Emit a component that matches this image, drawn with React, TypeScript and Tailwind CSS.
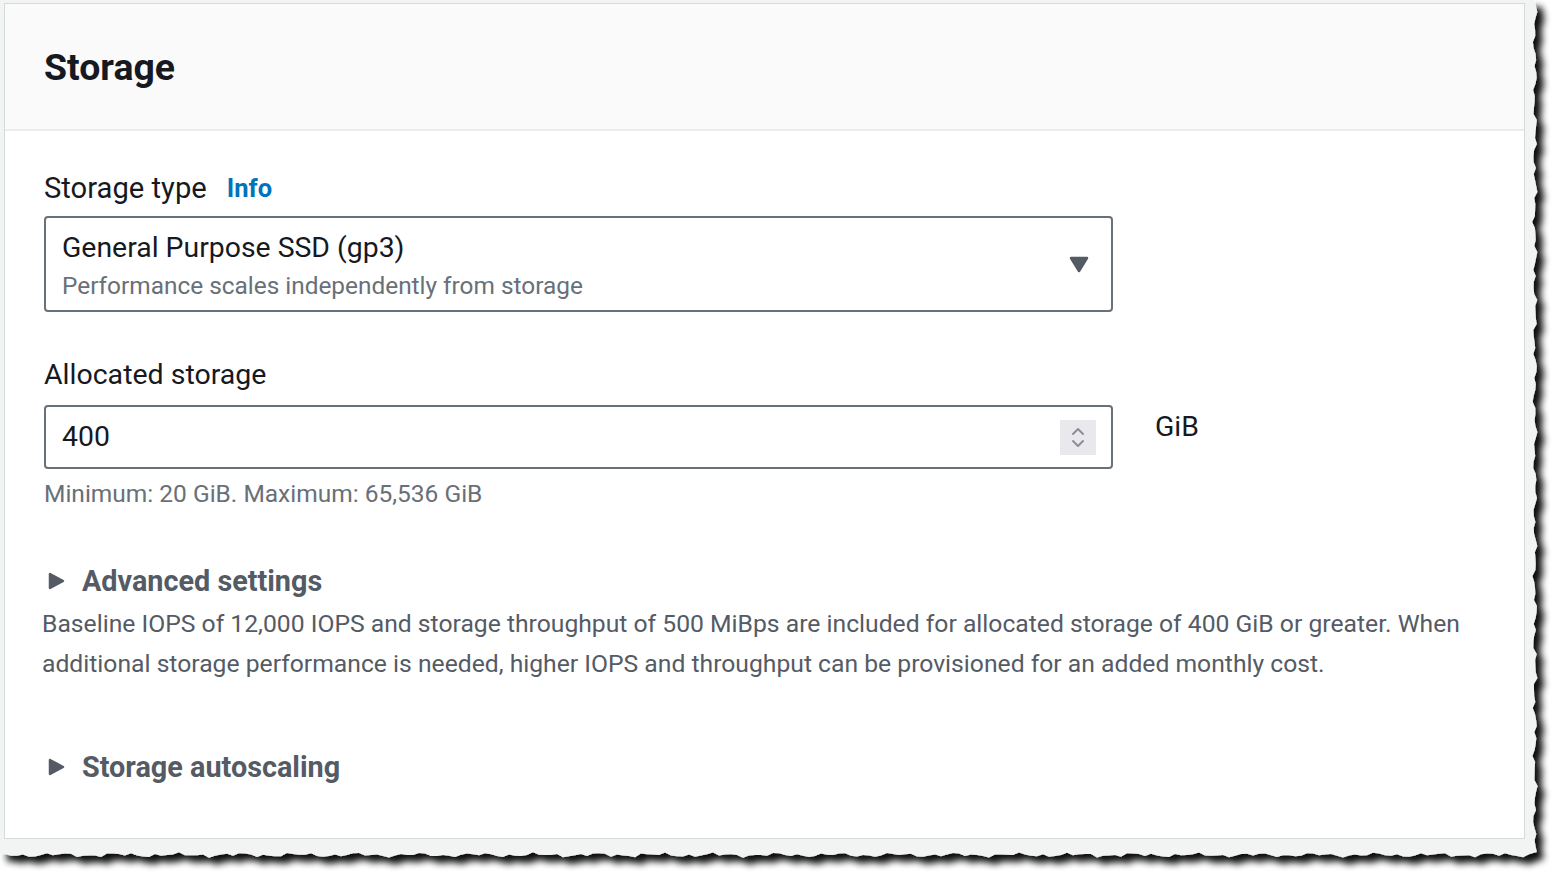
import type { ReactNode } from "react";

// Jagged edge for the torn-paper screenshot frame (right and bottom sides).
function tornPath(): string {
  const right = 1535;
  const bottom = 855;
  const jitter = (i: number) =>
    Math.sin(i * 1.7) * 1.2 + Math.sin(i * 0.63 + 1) * 1.1 + Math.sin(i * 3.1) * 0.6;
  const pts: string[] = ["M0,0", `L${right},0`];
  for (let y = 6, i = 0; y < bottom; y += 6, i++) {
    pts.push(`L${(right + jitter(i)).toFixed(1)},${y}`);
  }
  for (let x = right - 6, i = 40; x > 0; x -= 6, i++) {
    pts.push(`L${x},${(bottom + jitter(i)).toFixed(1)}`);
  }
  pts.push(`L0,${bottom}`, "Z");
  return pts.join(" ");
}

function TornPaper() {
  return (
    <svg width="1560" height="876" className="absolute inset-0" aria-hidden="true">
      <defs>
        <filter id="paperShadow" x="-5%" y="-5%" width="110%" height="110%">
          <feGaussianBlur in="SourceAlpha" stdDeviation="3.5" />
          <feOffset dx="7" dy="7" result="blur" />
          <feComponentTransfer>
            <feFuncA type="linear" slope="0.95" />
          </feComponentTransfer>
          <feMerge>
            <feMergeNode />
            <feMergeNode in="SourceGraphic" />
          </feMerge>
        </filter>
      </defs>
      <path d={tornPath()} fill="#f2f3f3" filter="url(#paperShadow)" />
    </svg>
  );
}

function Caret() {
  return (
    <svg width="17" height="18" viewBox="0 0 17 18" aria-hidden="true" className="shrink-0">
      <path d="M2 2 L15 9 L2 16 Z" fill="#545b64" stroke="#545b64" strokeWidth="2.5" strokeLinejoin="round" />
    </svg>
  );
}

function Expandable({ children }: { children: ReactNode }) {
  return (
    <div className="flex h-[40px] items-center gap-[17px] pl-[4px]">
      <Caret />
      <span className="text-[28.8px] font-bold leading-[40px] text-[#545b64]">{children}</span>
    </div>
  );
}

export default function App() {
  return (
    <div
      className="relative h-[876px] w-[1560px] overflow-hidden bg-white"
      style={{ fontFamily: "Roboto, 'Noto Sans', sans-serif" }}
    >
      <TornPaper />

      <div className="relative ml-[4px] mt-[3px] flex h-[836px] w-[1521px] flex-col border border-[#d5dbdb] bg-white">
        <div className="flex h-[127px] shrink-0 items-center border-b-2 border-[#eaeded] bg-[#fafafa] px-[39px]">
          <h2 className="text-[37.4px] font-bold leading-[44px] text-[#16191f]">Storage</h2>
        </div>

        <div className="flex flex-col px-[39px] pt-[37px]">
          <div className="flex h-[40px] items-center gap-[20px]">
            <span className="text-[29.2px] leading-[40px] text-[#16191f]">Storage type</span>
            <span className="text-[25.5px] font-bold leading-[40px] text-[#0073bb]">Info</span>
          </div>

          <div className="mt-[8px] flex w-[1069px] items-center justify-between rounded-[4px] border-2 border-[#687078] pl-[16px] pr-[22px] pb-[6px] pt-[10px]">
            <div className="flex flex-col">
              <span className="text-[28.4px] leading-[40px] text-[#16191f]">General Purpose SSD (gp3)</span>
              <span className="text-[24.4px] leading-[36px] text-[#687078]">Performance scales independently from storage</span>
            </div>
            <svg width="20" height="17" viewBox="0 0 20 17" aria-hidden="true" className="mb-[4px]">
              <path d="M2 2 L18 2 L10 15 Z" fill="#545b64" stroke="#545b64" strokeWidth="2.5" strokeLinejoin="round" />
            </svg>
          </div>

          <span className="mt-[43px] text-[28.5px] leading-[40px] text-[#16191f]">Allocated storage</span>

          <div className="mt-[10px] flex items-start gap-[42px]">
            <div className="flex h-[64px] w-[1069px] items-center justify-between rounded-[4px] border-2 border-[#687078] pl-[16px] pr-[15px]">
              <span className="text-[28.4px] leading-[40px] text-[#16191f]">400</span>
              <div className="flex h-[35px] w-[36px] flex-col items-center justify-center gap-[3px] bg-[#e9e9ed]">
                <svg width="14" height="9" viewBox="0 0 14 9" aria-hidden="true">
                  <path d="M2 7 L7 2 L12 7" fill="none" stroke="#8e8e9a" strokeWidth="2" strokeLinecap="round" strokeLinejoin="round" />
                </svg>
                <svg width="14" height="9" viewBox="0 0 14 9" aria-hidden="true">
                  <path d="M2 2 L7 7 L12 2" fill="none" stroke="#8e8e9a" strokeWidth="2" strokeLinecap="round" strokeLinejoin="round" />
                </svg>
              </div>
            </div>
            <span className="mt-[2px] text-[28.4px] leading-[40px] text-[#16191f]">GiB</span>
          </div>

          <span className="mt-[9px] text-[24.5px] leading-[32px] text-[#687078]">
            Minimum: 20 GiB. Maximum: 65,536 GiB
          </span>

          <div className="mt-[51px]">
            <Expandable>Advanced settings</Expandable>
          </div>
          <p className="-ml-[2px] mt-[3px] text-[24.7px] leading-[40px] text-[#545b64]">
            Baseline IOPS of 12,000 IOPS and storage throughput of 500 MiBps are included for allocated storage of
            400 GiB or greater. When additional storage performance is needed, higher IOPS and throughput can be
            provisioned for an added monthly cost.
          </p>

          <div className="mt-[63px]">
            <Expandable>Storage autoscaling</Expandable>
          </div>
        </div>
      </div>
    </div>
  );
}
